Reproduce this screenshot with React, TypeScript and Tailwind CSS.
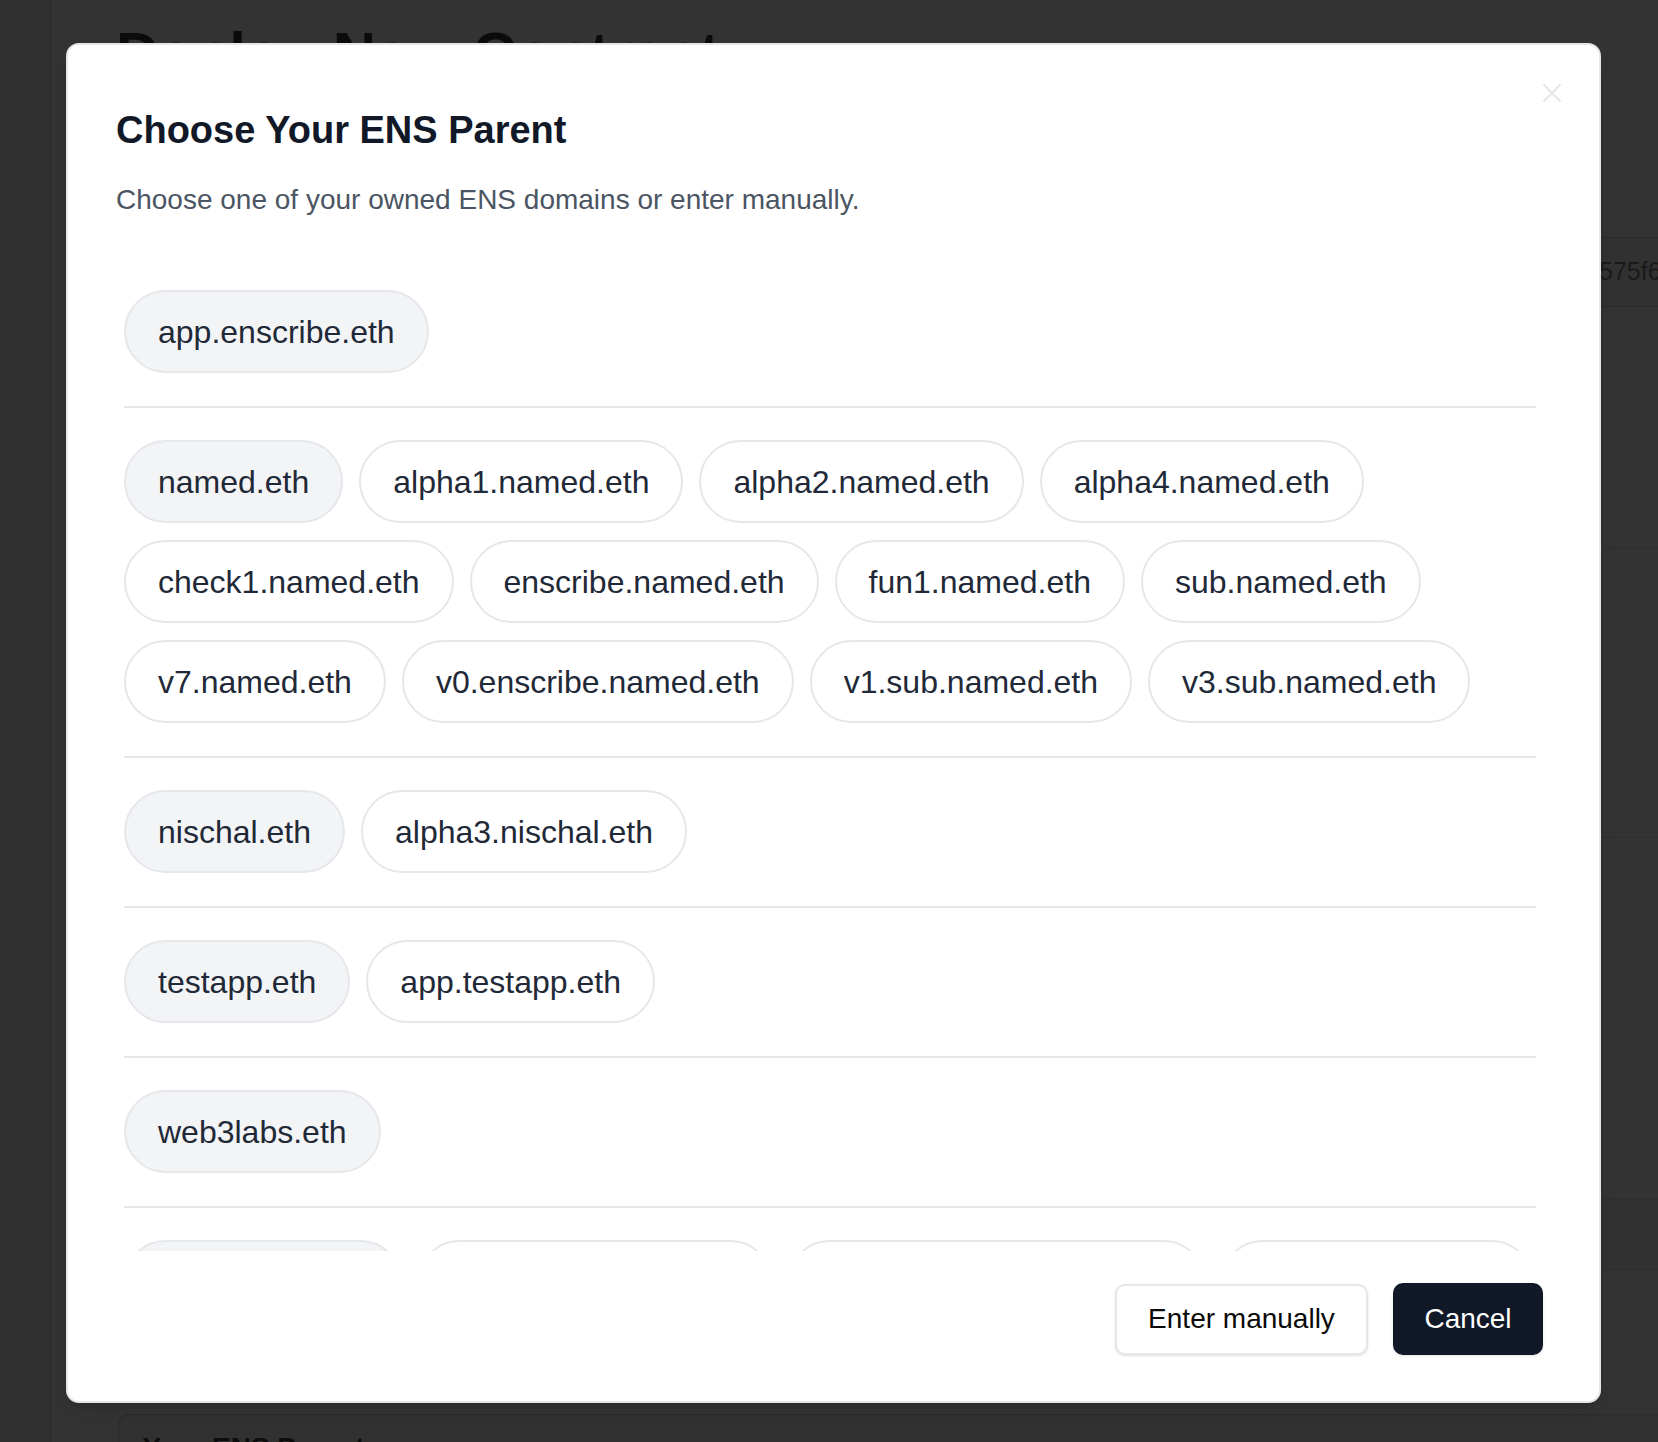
import React from "react";

type Pill = { name: string; parent?: boolean };

const groups: Pill[][] = [
  [{ name: "app.enscribe.eth", parent: true }],
  [
    { name: "named.eth", parent: true },
    { name: "alpha1.named.eth" },
    { name: "alpha2.named.eth" },
    { name: "alpha4.named.eth" },
    { name: "check1.named.eth" },
    { name: "enscribe.named.eth" },
    { name: "fun1.named.eth" },
    { name: "sub.named.eth" },
    { name: "v7.named.eth" },
    { name: "v0.enscribe.named.eth" },
    { name: "v1.sub.named.eth" },
    { name: "v3.sub.named.eth" },
  ],
  [{ name: "nischal.eth", parent: true }, { name: "alpha3.nischal.eth" }],
  [{ name: "testapp.eth", parent: true }, { name: "app.testapp.eth" }],
  [{ name: "web3labs.eth", parent: true }],
  [
    { name: "ensdomain.eth", parent: true },
    { name: "docs.ensdomain.eth" },
    { name: "contracts.ensdomain.eth" },
    { name: "ui.ensdomain.eth" },
  ],
];

function PillButton({ pill }: { pill: Pill }) {
  return (
    <button
      className={
        pill.parent
          ? "h-[83px] shrink-0 rounded-full border-2 border-[#e5e7eb] bg-[#f3f4f6] px-[32px] text-[32px] leading-none text-[#1f2937] flex items-center"
          : "h-[83px] shrink-0 rounded-full border-2 border-[#e5e7eb] bg-white px-[32px] text-[32px] leading-none text-[#1f2937] flex items-center"
      }
    >
      {pill.name}
    </button>
  );
}

export default function App() {
  return (
    <div className="relative w-[1658px] h-[1442px] overflow-hidden bg-[#333333] flex font-['Liberation_Sans',Arial,sans-serif]">
      {/* page behind the overlay */}
      <div className="w-[51px] shrink-0 h-full bg-[#303030] border-r border-[#2a2a2a]" />
      <div className="flex-1 min-w-0 pl-[65px] flex flex-col overflow-hidden">
        <div className="mt-[24px] h-[60px] text-[60px] leading-[60px] font-bold text-[#0b0b0b] whitespace-nowrap">
          Deploy New Contract
        </div>
        <div className="mt-[153px] h-[70px] shrink-0 border-y border-[#2b2b2b] bg-[#313131] flex items-center whitespace-nowrap">
          <span className="inline-block w-[1483px] shrink-0" />
          <span className="text-[25px] text-[#1a1a1a]">575f6a9e21c4</span>
        </div>
        <div className="h-[241px] shrink-0" />
        <div className="h-[289px] shrink-0 border-t border-[#2e2e2e]" />
        <div className="h-[362px] shrink-0 border-t border-[#2e2e2e]" />
        <div className="h-[70px] shrink-0 border-t border-[#2e2e2e] bg-[#313131]" />
        <div className="h-[145px] shrink-0 border-t border-[#2e2e2e]" />
        <div className="ml-[1.5px] flex-1 rounded-tl-[12px] border-l border-t border-[#2b2b2b] bg-[#313131] pl-[24px] pt-[12px]">
          <div className="text-[28px] font-semibold text-[#0d0d0d] whitespace-nowrap">Your ENS Parent</div>
        </div>
      </div>

      {/* modal */}
      <div className="absolute left-[66px] top-[43px] w-[1535px] h-[1360px] rounded-[13px] border-2 border-[#e5e7eb] bg-white shadow-lg flex flex-col pl-[48px] pr-[56px] pt-[61px] pb-[46px]">
        <button className="absolute right-[38px] top-[39px] w-[18px] h-[18px]">
          <svg width="18" height="18" viewBox="0 0 18 18" fill="none">
            <path d="M1 1L17 17M17 1L1 17" stroke="#e6e6e6" strokeWidth="2" strokeLinecap="round" />
          </svg>
        </button>
        <div className="h-[48px] text-[38px] leading-[48px] font-bold text-[#111827] whitespace-nowrap">
          Choose Your ENS Parent
        </div>
        <div className="mt-[26px] h-[40px] text-[28px] leading-[40px] text-[#4b5563] whitespace-nowrap">
          Choose one of your owned ENS domains or enter manually.
        </div>
        <div className="mt-[70px] flex-1 min-h-0 overflow-hidden pl-[8px] pr-[7px]">
          {groups.map((g, i) => (
            <div key={i}>
              {i > 0 && <div className="h-[2px] bg-[#e5e7eb]" />}
              <div
                className={
                  i === 0
                    ? "flex flex-wrap gap-x-[16px] gap-y-[17px] pb-[33px]"
                    : "flex flex-wrap gap-x-[16px] gap-y-[17px] pt-[32px] pb-[33px]"
                }
              >
                {g.map((p) => (
                  <PillButton key={p.name} pill={p} />
                ))}
              </div>
            </div>
          ))}
        </div>
        <div className="mt-[32px] h-[72px] shrink-0 flex justify-end items-center gap-[25px]">
          <button className="w-[253px] h-[71px] rounded-[10px] border-2 border-[#e5e7eb] bg-white shadow-sm text-[28px] text-[#0a0a0a] flex items-center justify-center whitespace-nowrap">
            Enter manually
          </button>
          <button className="w-[150px] h-[72px] rounded-[10px] bg-[#111827] shadow-sm text-[28px] text-white flex items-center justify-center">
            Cancel
          </button>
        </div>
      </div>
    </div>
  );
}
